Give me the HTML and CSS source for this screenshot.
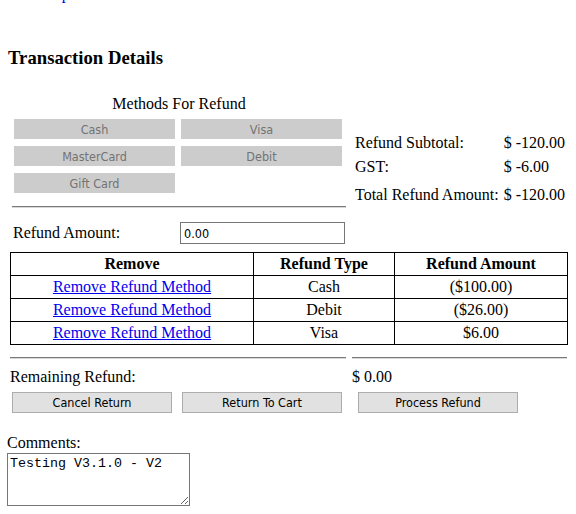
FILE: index.html
```html
<!DOCTYPE html>
<html>
<head>
<meta charset="utf-8">
<title>Transaction Details</title>
<link rel="stylesheet" href="styles.css">
</head>
<body>
<div class="toplink"><a href="#">Lookup</a></div>
<h3 class="heading">Transaction Details</h3>

<div class="top">
  <div class="methods">
    <div class="methods-title">Methods For Refund</div>
    <div class="method-grid">
      <button class="method-btn" disabled>Cash</button>
      <button class="method-btn" disabled>Visa</button>
      <button class="method-btn" disabled>MasterCard</button>
      <button class="method-btn" disabled>Debit</button>
      <button class="method-btn" disabled>Gift Card</button>
    </div>
    <div class="rule"></div>
  </div>
  <div class="totals">
    <div class="tot-row r1"><span class="tot-label">Refund Subtotal:</span><span>$ -120.00</span></div>
    <div class="tot-row r2"><span class="tot-label">GST:</span><span>$ -6.00</span></div>
    <div class="tot-row r3"><span class="tot-label">Total Refund Amount:</span><span>$ -120.00</span></div>
  </div>
</div>

<div class="amount-row">
  <label class="amount-label" for="amt">Refund Amount:</label>
  <input id="amt" class="amount-input" type="text" value="0.00">
</div>

<table class="refunds">
  <colgroup>
    <col class="c1"><col class="c2"><col class="c3">
  </colgroup>
  <thead>
    <tr><th>Remove</th><th>Refund Type</th><th>Refund Amount</th></tr>
  </thead>
  <tbody>
    <tr><td><a href="#">Remove Refund Method</a></td><td>Cash</td><td>($100.00)</td></tr>
    <tr><td><a href="#">Remove Refund Method</a></td><td>Debit</td><td>($26.00)</td></tr>
    <tr><td><a href="#">Remove Refund Method</a></td><td>Visa</td><td>$6.00</td></tr>
  </tbody>
</table>

<div class="split-rules">
  <div class="rule left"></div>
  <div class="rule right"></div>
</div>

<div class="remaining">
  <span class="rem-label">Remaining Refund:</span>
  <span>$ 0.00</span>
</div>

<div class="actions">
  <button class="act-btn">Cancel Return</button>
  <button class="act-btn">Return To Cart</button>
  <button class="act-btn process">Process Refund</button>
</div>

<div class="comments-label">Comments:</div>
<textarea class="comments">Testing V3.1.0 - V2</textarea>
</body>
</html>
```

FILE: styles.css
```css
html, body {
  margin: 0;
  padding: 0;
  background: #ffffff;
}
body {
  font-family: "Liberation Serif", "Times New Roman", serif;
  font-size: 16px;
  color: #000;
  width: 576px;
  overflow: hidden;
}
.toplink {
  margin-top: -15px;
  height: 18px;
  line-height: 18px;
  padding-left: 20px;
}
.toplink a {
  color: #0000ee;
  text-decoration: none;
}
.heading {
  margin: 44px 0 0 0;
  padding-left: 8px;
  font-size: 18.72px;
  line-height: 22px;
  font-weight: bold;
}
.top {
  display: flex;
  align-items: flex-start;
  margin-top: 26px;
}
.methods {
  width: 334px;
  margin-left: 12px;
}
.methods-title {
  line-height: 18px;
  height: 18px;
  text-align: center;
}
.method-grid {
  display: grid;
  grid-template-columns: 161px 161px;
  grid-auto-rows: 20px;
  column-gap: 6px;
  row-gap: 7px;
  margin: 6px 0 0 2px;
}
.method-btn {
  margin: 0;
  padding: 0;
  border: none;
  background: #cccccc;
  color: #737373;
  font-family: "DejaVu Sans Condensed", "DejaVu Sans", sans-serif;
  font-size: 12.5px;
  height: 20px;
}
.rule {
  height: 0;
  border-top: 1px solid #7a7a7a;
  border-bottom: 1px solid #d8d8d8;
}
.methods .rule {
  margin-top: 13px;
}
.totals {
  margin-left: 9px;
  margin-top: 39px;
  display: grid;
  grid-template-columns: auto auto;
  column-gap: 5px;
}
.tot-row {
  display: contents;
}
.tot-row span {
  line-height: 18px;
  height: 18px;
}
.r2 span { margin-top: 6px; }
.r3 span { margin-top: 10px; }
.amount-row {
  display: flex;
  align-items: center;
  margin-top: 14px;
  height: 22px;
}
.amount-label {
  width: 167px;
  padding-left: 13px;
  line-height: 18px;
}
.amount-input {
  box-sizing: border-box;
  width: 165px;
  height: 22px;
  margin: 0;
  padding: 1px 3px;
  border: 1px solid #767676;
  font-family: "DejaVu Sans Condensed", "DejaVu Sans", sans-serif;
  font-size: 12.5px;
  color: #000;
}
.refunds {
  margin: 8px 0 0 10px;
  width: 557px;
  border-collapse: collapse;
  border: 1px solid #000;
  table-layout: fixed;
}
.refunds .c1 { width: 243px; }
.refunds .c2 { width: 141px; }
.refunds .c3 { width: 173px; }
.refunds th, .refunds td {
  border: 1px solid #000;
  padding: 0;
  height: 22px;
  line-height: 18px;
  text-align: center;
  font-size: 16px;
}
.refunds th {
  font-weight: bold;
}
.refunds a {
  color: #0000ee;
  text-decoration: underline;
}
.split-rules {
  display: flex;
  gap: 6px;
  margin: 12px 0 0 10px;
}
.split-rules .left { width: 336px; }
.split-rules .right { width: 215px; }
.remaining {
  display: flex;
  margin-top: 9px;
  line-height: 18px;
  height: 18px;
}
.rem-label {
  width: 342px;
  padding-left: 10px;
}
.actions {
  display: flex;
  margin: 6px 0 0 12px;
}
.act-btn {
  box-sizing: border-box;
  width: 160px;
  height: 21px;
  margin: 0 10px 0 0;
  padding: 0;
  background: #e1e1e1;
  border: 1px solid #adadad;
  color: #000;
  font-family: "DejaVu Sans Condensed", "DejaVu Sans", sans-serif;
  font-size: 12.5px;
}
.act-btn.process {
  margin-left: 6px;
}
.comments-label {
  margin-top: 21px;
  padding-left: 7px;
  line-height: 18px;
  height: 18px;
}
.comments {
  display: block;
  box-sizing: border-box;
  margin: 1px 0 0 7px;
  width: 183px;
  height: 53px;
  padding: 2px;
  border: 1px solid #767676;
  font-family: "Liberation Mono", "Courier New", monospace;
  font-size: 13.33px;
  color: #000;
}
```
